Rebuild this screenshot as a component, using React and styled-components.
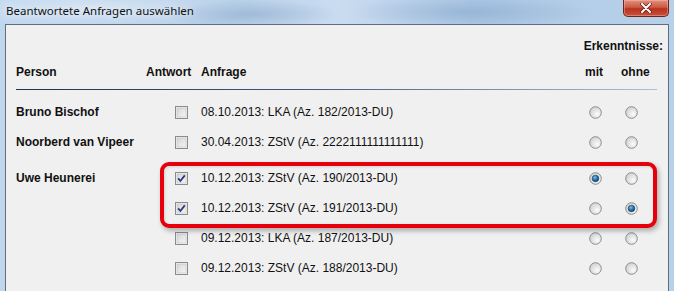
import React from 'react';
import styled, { createGlobalStyle } from 'styled-components';

const GlobalStyle = createGlobalStyle`
  html, body {
    margin: 0;
    padding: 0;
  }
  body {
    width: 674px;
    height: 291px;
    overflow: hidden;
    background: #b4cde7;
  }
`;

const Window = styled.div`
  width: 674px;
  height: 291px;
  display: flex;
  flex-direction: column;
  background:
    radial-gradient(ellipse 90px 14px at 250px 14px, rgba(140, 168, 200, 0.55), transparent),
    radial-gradient(ellipse 120px 16px at 470px 12px, rgba(130, 162, 200, 0.5), transparent),
    radial-gradient(ellipse 160px 20px at 90px 8px, rgba(222, 234, 246, 0.75), transparent),
    linear-gradient(90deg, #bfd6ee 0%, #b8d0ea 35%, #cadcf0 50%, #afc9e6 70%, #b8d1ea 100%);
`;

const TitleBar = styled.div`
  height: 24px;
  flex: none;
  display: flex;
  justify-content: space-between;
  align-items: flex-start;
`;

const Title = styled.span`
  padding: 3px 0 0 6px;
  font-family: "Noto Sans", "Open Sans", sans-serif;
  font-size: 11.5px;
  line-height: 15px;
  color: #111;
  text-shadow: 0 0 6px rgba(255, 255, 255, 0.9);
`;

const CloseButton = styled.div`
  width: 44px;
  height: 16px;
  margin-right: 5px;
  display: flex;
  align-items: center;
  justify-content: center;
  border: 1px solid #6e2419;
  border-top: none;
  border-radius: 0 0 5px 5px;
  background: linear-gradient(180deg, #e0907f 0%, #cc5a45 45%, #b8321d 55%, #c9513a 100%);
  box-shadow: inset 0 0 0 1px rgba(255, 200, 190, 0.4);
`;

const Frame = styled.div`
  flex: 1;
  display: flex;
  padding: 0 5px;
  min-height: 0;
`;

const Client = styled.div`
  flex: 1;
  border: 1px solid #5f6d7e;
  border-bottom: none;
  background: #f0f0f0;
  font-family: "Liberation Sans", Arial, sans-serif;
  font-size: 12px;
  color: #111;
`;

const Panel = styled.div`
  position: relative;
  padding: 14px 5px 0 10px;
`;

const GroupLabel = styled.div`
  display: flex;
  justify-content: flex-end;
  font-weight: bold;
  line-height: 14px;
`;

const columns = '130px 55px 383px 33px 40px';

const HeaderRow = styled.div`
  display: grid;
  grid-template-columns: ${columns};
  align-items: center;
  height: 16px;
  margin-top: 11px;
  font-weight: bold;
`;

const HeadCell = styled.div`
  padding-left: ${(p) => p.$pad || 0}px;
`;

const Divider = styled.div`
  height: 1px;
  width: 641px;
  margin-top: 9px;
  background: linear-gradient(90deg, #1e3554 0%, #3c5a80 45%, #a8c2de 100%);
`;

const Row = styled.div`
  display: grid;
  grid-template-columns: ${columns};
  align-items: center;
  height: 30px;
  margin-top: ${(p) => p.$top || 0}px;
`;

const Person = styled.div`
  font-weight: bold;
`;

const CheckCell = styled.div`
  display: flex;
  padding-left: 29px;
`;

const RadioCell = styled.div`
  display: flex;
  justify-content: center;
  padding-right: ${(p) => p.$right || 0}px;
`;

const Highlight = styled.div`
  position: absolute;
  left: 154px;
  top: 137px;
  width: 489px;
  height: 58px;
  border: 4px solid #e5000c;
  border-radius: 9px;
  box-shadow: 2px 3px 5px rgba(0, 0, 0, 0.28), inset 1px 1px 3px rgba(0, 0, 0, 0.12);
  pointer-events: none;
`;

const CheckBox = ({ checked }) => (
  <svg width="13" height="13" viewBox="0 0 13 13">
    <defs>
      <linearGradient id="cbg" x1="0" y1="0" x2="1" y2="1">
        <stop offset="0" stopColor="#d4d4d4" />
        <stop offset="1" stopColor="#f7f7f7" />
      </linearGradient>
    </defs>
    <rect x="0.5" y="0.5" width="12" height="12" fill="#f4f4f4" stroke="#8a8b8b" />
    <rect x="2" y="2" width="9" height="9" fill="url(#cbg)" stroke="#c0c0c0" strokeWidth="0.6" />
    {checked && (
      <path d="M3.2 6.4 L5.4 9 L9.8 3.4" fill="none" stroke="#26357a" strokeWidth="1.7" />
    )}
  </svg>
);

const Radio = ({ checked }) => (
  <svg width="13" height="13" viewBox="0 0 13 13">
    <defs>
      <radialGradient id="rbg" cx="0.65" cy="0.65" r="0.7">
        <stop offset="0" stopColor="#fbfbfb" />
        <stop offset="1" stopColor="#d0d0d0" />
      </radialGradient>
      <radialGradient id="rdot" cx="0.4" cy="0.35" r="0.7">
        <stop offset="0" stopColor="#7dc0ea" />
        <stop offset="0.6" stopColor="#1d6aa6" />
        <stop offset="1" stopColor="#0d3d66" />
      </radialGradient>
    </defs>
    <circle cx="6.5" cy="6.5" r="5.8" fill="url(#rbg)" stroke="#8b8d8d" strokeWidth="1" />
    {checked && <circle cx="6.5" cy="6.5" r="3.3" fill="url(#rdot)" stroke="#123f62" strokeWidth="0.6" />}
  </svg>
);

const rows = [
  { person: 'Bruno Bischof', text: '08.10.2013: LKA (Az. 182/2013-DU)', top: 7 },
  { person: 'Noorberd van Vipeer', text: '30.04.2013: ZStV (Az. 2222111111111111)' },
  { person: 'Uwe Heunerei', text: '10.12.2013: ZStV (Az. 190/2013-DU)', checked: true, mit: true, top: 6 },
  { text: '10.12.2013: ZStV (Az. 191/2013-DU)', checked: true, ohne: true },
  { text: '09.12.2013: LKA (Az. 187/2013-DU)' },
  { text: '09.12.2013: ZStV (Az. 188/2013-DU)' },
];

const App = () => (
  <>
    <GlobalStyle />
    <Window>
      <TitleBar>
        <Title>Beantwortete Anfragen auswählen</Title>
        <CloseButton>
          <svg width="14" height="10" viewBox="0 0 14 10">
            <path d="M3 1 L11 9 M11 1 L3 9" stroke="#5a1e16" strokeWidth="3.4" strokeLinecap="round" />
            <path d="M3 1 L11 9 M11 1 L3 9" stroke="#ffffff" strokeWidth="2" strokeLinecap="round" />
          </svg>
        </CloseButton>
      </TitleBar>
      <Frame>
        <Client>
          <Panel>
            <GroupLabel>Erkenntnisse:</GroupLabel>
            <HeaderRow>
              <HeadCell>Person</HeadCell>
              <HeadCell>Antwort</HeadCell>
              <HeadCell>Anfrage</HeadCell>
              <HeadCell $pad={1}>mit</HeadCell>
              <HeadCell $pad={4}>ohne</HeadCell>
            </HeaderRow>
            <Divider />
            {rows.map((r, i) => (
              <Row key={i} $top={r.top}>
                <Person>{r.person}</Person>
                <CheckCell>
                  <CheckBox checked={r.checked} />
                </CheckCell>
                <div>{r.text}</div>
                <RadioCell $right={11}>
                  <Radio checked={r.mit} />
                </RadioCell>
                <RadioCell $right={12}>
                  <Radio checked={r.ohne} />
                </RadioCell>
              </Row>
            ))}
            <Highlight />
          </Panel>
        </Client>
      </Frame>
    </Window>
  </>
);

export default App;
